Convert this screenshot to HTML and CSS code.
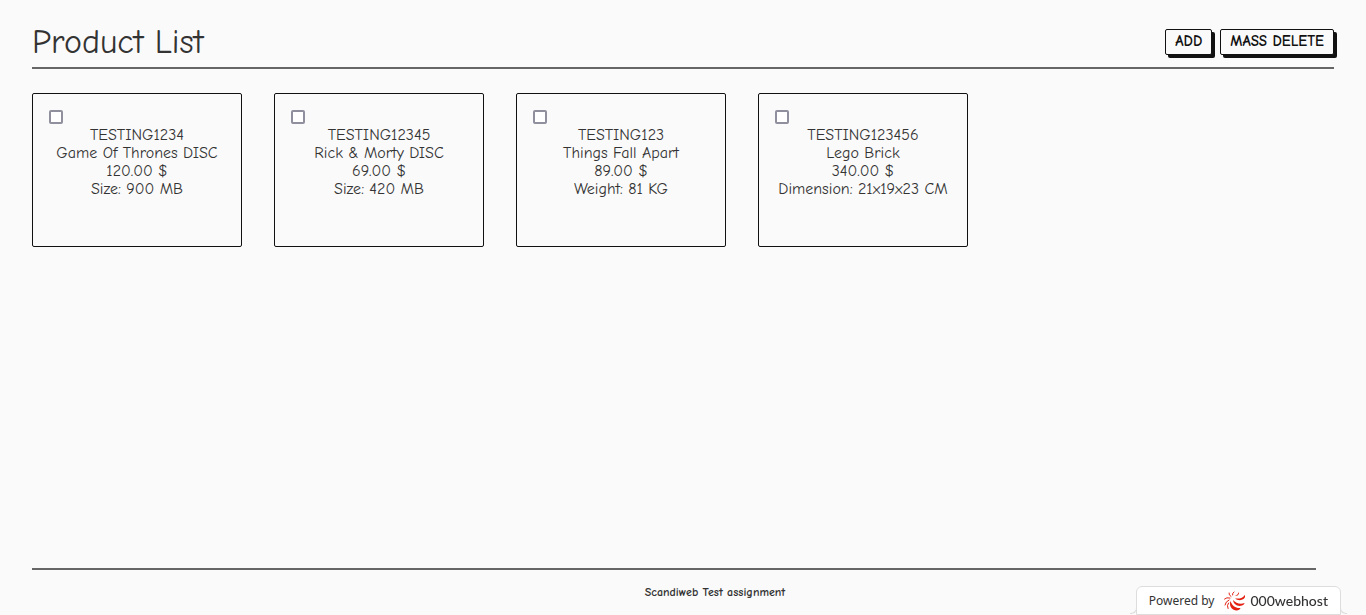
FILE: index.html
```html
<!DOCTYPE html>
<html lang="en">
<head>
<meta charset="utf-8">
<meta name="viewport" content="width=device-width, initial-scale=1">
<title>Product List</title>
<link rel="stylesheet" href="styles.css">
</head>
<body>
<form class="page">
  <header class="header">
    <h1 class="title">Product List</h1>
    <div class="actions">
      <button class="button" type="button">ADD</button>
      <button class="button" type="submit">MASS DELETE</button>
    </div>
  </header>
  <main class="products">
    <article class="card">
      <input class="check" type="checkbox" aria-label="Select TESTING1234">
      <p>TESTING1234</p>
      <p>Game Of Thrones DISC</p>
      <p>120.00 $</p>
      <p>Size: 900 MB</p>
    </article>
    <article class="card">
      <input class="check" type="checkbox" aria-label="Select TESTING12345">
      <p>TESTING12345</p>
      <p>Rick &amp; Morty DISC</p>
      <p>69.00 $</p>
      <p>Size: 420 MB</p>
    </article>
    <article class="card">
      <input class="check" type="checkbox" aria-label="Select TESTING123">
      <p>TESTING123</p>
      <p>Things Fall Apart</p>
      <p>89.00 $</p>
      <p>Weight: 81 KG</p>
    </article>
    <article class="card">
      <input class="check" type="checkbox" aria-label="Select TESTING123456">
      <p>TESTING123456</p>
      <p>Lego Brick</p>
      <p>340.00 $</p>
      <p>Dimension: 21x19x23 CM</p>
    </article>
  </main>
  <footer class="footer">Scandiweb Test assignment</footer>
</form>
<a class="host" href="#">
  <span>Powered by</span>
  <svg class="host-logo" viewBox="0 0 24 22" aria-hidden="true">
    <path d="M8.500 11C7 15 9 20 14 20.500C16.500 20.700 18 19.500 18.500 18C14 18.500 10 16 8.500 11Z"/>
    <path d="M11 10C11.500 14.500 16 17 20 15.500C21.500 15 22.500 14 22.500 13C18.500 14.500 14 13.500 11 10Z"/>
    <path d="M13 8.500C16 11 20.500 10.500 22.500 8C23.300 7 23.200 6 22.500 5C21 8 18 9 13 8.500Z"/>
    <path d="M13 6C15.500 6 17.500 4.500 17 2C16 4 15 5.200 13 6Z"/>
    <g class="host-lines">
      <path d="M10.500 5Q10 3 12 2"/>
      <path d="M9 6.500Q6.500 5 7 3"/>
      <path d="M8 8Q4.500 7 2.500 9"/>
      <path d="M7 10Q3.500 11.500 3 15"/>
      <path d="M6.500 13Q4.500 15.500 6 18.500"/>
    </g>
  </svg>
  <span class="host-name">000webhost</span>
</a>
</body>
</html>
```
FILE: styles.css
```css
* {
  box-sizing: border-box;
}

body {
  margin: 0;
  background: #fafafa;
  color: #333;
  font-family: "Comic Neue", Lato, sans-serif;
  font-size: 16px;
  line-height: 18px;
}

.page {
  display: flex;
  flex-direction: column;
  min-height: 100vh;
  padding: 16px 32px 0;
}

.header {
  display: flex;
  align-items: center;
  justify-content: space-between;
  height: 53px;
  padding-top: 1px;
  border-bottom: 2px solid #666;
}

.title {
  margin: 0;
  font-size: 34px;
  font-weight: 400;
  line-height: 40px;
}

.actions {
  display: flex;
  gap: 8px;
}

.button {
  height: 26px;
  padding: 0 9px 2px;
  border: 1px solid #111;
  border-radius: 2px;
  background: #fafafa;
  box-shadow: 3px 3px 0 #111;
  color: #111;
  font: 700 15px/20px "Comic Neue", Lato, sans-serif;
}

.products {
  display: grid;
  grid-template-columns: repeat(auto-fill, 210px);
  gap: 32px;
  padding-top: 24px;
}

.card {
  min-height: 154px;
  padding: 16px;
  border: 1px solid #111;
  border-radius: 2px;
  font-weight: 400;
  text-align: center;
}

.card p {
  margin: 0;
  white-space: nowrap;
}

.check {
  display: block;
  appearance: none;
  width: 14px;
  height: 14px;
  margin: 0 0 2px;
  border: 2px solid #8f8f9d;
  border-radius: 2px;
  background: #fff;
}

.check:checked {
  background: #8f8f9d;
}

.footer {
  margin: auto 18px 0 0;
  padding: 13px 0 14px 82px;
  border-top: 2px solid #666;
  font-size: 12px;
  font-weight: 700;
  text-align: center;
}

.host {
  position: fixed;
  right: 25px;
  bottom: 0;
  display: flex;
  align-items: center;
  gap: 8px;
  height: 29px;
  padding: 0 12px;
  border: 1px solid #ddd;
  border-radius: 6px 6px 0 0;
  background: #fff;
  color: #333;
  font-family: "Noto Sans", sans-serif;
  font-size: 12px;
  text-decoration: none;
}

.host::before,
.host::after {
  content: "";
  position: absolute;
  bottom: 0;
  width: 6px;
  height: 6px;
  border-bottom: 1px solid #ddd;
}

.host::before {
  right: 100%;
  border-right: 1px solid #ddd;
  border-bottom-right-radius: 6px;
}

.host::after {
  left: 100%;
  border-left: 1px solid #ddd;
  border-bottom-left-radius: 6px;
}

.host-logo {
  width: 24px;
  height: 22px;
  margin-right: -4px;
  fill: #e32213;
}

.host-lines {
  fill: none;
  stroke: #e32213;
  stroke-width: 1;
  stroke-linecap: round;
}

.host-name {
  font-family: Lato, sans-serif;
  font-size: 14px;
  font-weight: 500;
}
```
